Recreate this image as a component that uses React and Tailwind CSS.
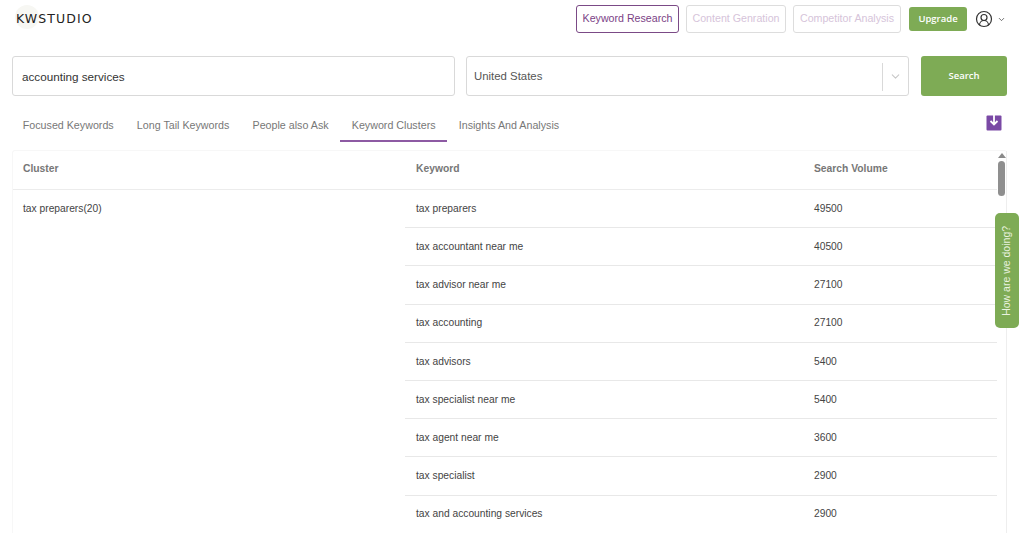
import React from "react";
import { ChevronDown, CircleUserRound } from "lucide-react";

const rows = [
  ["tax preparers", "49500"],
  ["tax accountant near me", "40500"],
  ["tax advisor near me", "27100"],
  ["tax accounting", "27100"],
  ["tax advisors", "5400"],
  ["tax specialist near me", "5400"],
  ["tax agent near me", "3600"],
  ["tax specialist", "2900"],
  ["tax and accounting services", "2900"],
];

const tabs = ["Focused Keywords", "Long Tail Keywords", "People also Ask", "Keyword Clusters", "Insights And Analysis"];

export default function App() {
  return (
    <div className="relative h-[533px] w-[1024px] overflow-hidden bg-white font-['Liberation_Sans',Arial,sans-serif] text-[#444]">
      <header className="flex h-[56px] items-start justify-between pl-4 pr-[18px] pt-[5px]">
        <div className="relative mt-[6px] flex h-[16px] items-center">
          <span className="absolute -left-[1px] -top-[6px] h-[24px] w-[24px] rounded-full bg-[#f7f7f3]" />
          <span className="relative font-['DejaVu_Sans',sans-serif] text-[12.5px] leading-none tracking-[1.1px] text-[#222]">KWSTUDIO</span>
        </div>
        <div className="flex items-center">
          <button className="flex h-[28px] w-[103px] items-center justify-center rounded-[3px] border border-[#7b4a86] text-[10.65px] text-[#7b3f86]">Keyword Research</button>
          <button className="ml-[7px] flex h-[28px] w-[100px] items-center justify-center rounded-[3px] border border-[#dddddd] text-[10.65px] text-[#d6c4da]">Content Genration</button>
          <button className="ml-[7px] flex h-[28px] w-[108px] items-center justify-center rounded-[3px] border border-[#dddddd] text-[10.65px] text-[#d6c4da]">Competitor Analysis</button>
          <button className="ml-[8px] flex h-[24px] w-[58px] items-center justify-center rounded-[3px] bg-[#7eab55] font-['Open_Sans',sans-serif] text-[9.5px] font-semibold text-white">Upgrade</button>
          <CircleUserRound className="ml-[8px] h-[18px] w-[18px] text-[#333]" strokeWidth={1.6} />
          <ChevronDown className="ml-[4px] h-[9px] w-[9px] text-[#444]" strokeWidth={2} />
        </div>
      </header>

      <div className="flex pl-3 pr-[17px]">
        <div className="flex h-[40px] w-[443px] items-center rounded-[3px] border border-[#d9d9d9] pl-[9px] pt-[1px] text-[11.7px] text-[#333]">accounting services</div>
        <div className="ml-[11px] flex h-[40px] w-[443px] items-center justify-between rounded-[3px] border border-[#d9d9d9] pl-[7px] pt-[1px] text-[11.4px] text-[#555]">
          <span>United States</span>
          <div className="flex h-[28px] w-[26px] items-center justify-center border-l border-[#d9d9d9]">
            <ChevronDown className="h-[13px] w-[13px] text-[#c8c8c8]" strokeWidth={2} />
          </div>
        </div>
        <button className="ml-[12px] flex h-[40px] w-[86px] items-center justify-center rounded-[3px] bg-[#7eab55] pt-[1px] font-['Open_Sans',sans-serif] text-[9.5px] font-semibold text-white">Search</button>
      </div>

      <div className="flex h-[54px] items-start justify-between pl-[11.2px] pr-[22px]">
        <nav className="flex pt-[10px]">
          {tabs.map((t) => (
            <div
              key={t}
              className={`h-[36px] px-[11.6px] pt-[13px] text-[10.7px] leading-[12px] text-[#777] ${t === "Keyword Clusters" ? "border-b-2 border-[#8d5aa3]" : ""}`}
            >
              {t}
            </div>
          ))}
        </nav>
        <svg viewBox="0 0 16 18" className="mt-[17px] h-[18px] w-[16px]">
          <rect x="0.5" y="2.5" width="15" height="15" rx="1" fill="#7a49a5" />
          <path d="M8 1v10M4.5 8 8 11.5 11.5 8" stroke="#fff" strokeWidth="1.8" fill="none" />
        </svg>
      </div>

      <div className="ml-3 mr-[17px] flex h-[383px] rounded-t-[3px] border-l border-t border-[#f7f7f7]">
        <div className="min-w-0 flex-1">
          <div className="flex h-[39px] items-center border-b border-[#ececec] pb-[2px] text-[10.3px] font-bold text-[#777]">
            <div className="w-[392px] pl-[10px]">Cluster</div>
            <div className="w-[399px] pl-[11px]">Keyword</div>
            <div className="pl-[10px]">Search Volume</div>
          </div>
          <div className="flex">
            <div className="w-[392px] pl-[10px] pt-[12px] text-[10.25px] leading-[13px] text-[#444]">tax preparers(20)</div>
            <div className="flex-1">
              {rows.map(([k, v]) => (
                <div key={k} className="flex h-[38.2px] items-center border-b border-[#e8e8e8] text-[10.25px] text-[#444]">
                  <div className="w-[399px] pl-[11px]">{k}</div>
                  <div className="pl-[10px]">{v}</div>
                </div>
              ))}
            </div>
          </div>
        </div>
        <div className="flex w-[10px] flex-col items-center border-r border-[#eeeeee] pt-[2px]">
          <div className="h-0 w-0 border-x-[4px] border-b-[5px] border-x-transparent border-b-[#8a8a8a]" />
          <div className="mt-[3px] h-[35px] w-[7px] rounded-[4px] bg-[#8f8f8f]" />
        </div>
      </div>

      <div className="absolute left-[995px] top-[213px] flex h-[115px] w-[24px] items-center justify-center rounded-[5px] bg-[#7eab55]">
        <span className="whitespace-nowrap text-[10.5px] text-[#e9f2df] [transform:rotate(-90deg)]">How are we doing?</span>
      </div>
    </div>
  );
}
